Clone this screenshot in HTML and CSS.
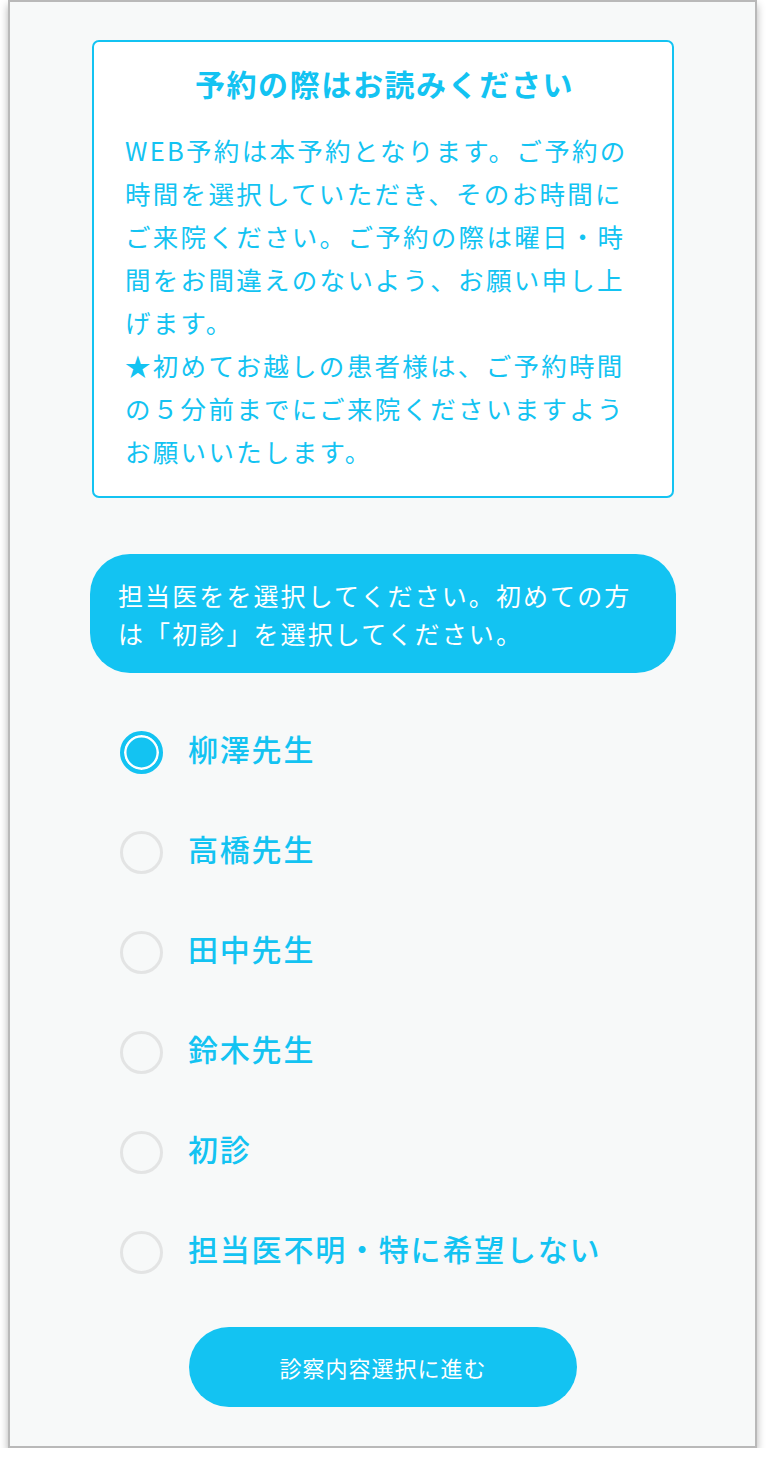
FILE: index.html
```html
<!DOCTYPE html>
<html lang="ja">
<head>
    <meta charset="UTF-8">
    <title>WEB予約 担当医選択</title>
    <link rel="stylesheet" href="styles.css">
</head>
<body>
    <div class="frame">
        <div class="notice">
            <h2>予約の際はお読みください</h2>
            <p>WEB予約は本予約となります。ご予約の時間を選択していただき、そのお時間にご来院ください。ご予約の際は曜日・時間をお間違えのないよう、お願い申し上げます。<br>★初めてお越しの患者様は、ご予約時間の５分前までにご来院くださいますようお願いいたします。</p>
        </div>

        <div class="bubble">担当医をを選択してください。初めての方は「初診」を選択してください。</div>

        <form class="doctor-list">
            <label class="doctor"><input type="radio" name="doctor" checked><span>柳澤先生</span></label>
            <label class="doctor"><input type="radio" name="doctor"><span>高橋先生</span></label>
            <label class="doctor"><input type="radio" name="doctor"><span>田中先生</span></label>
            <label class="doctor"><input type="radio" name="doctor"><span>鈴木先生</span></label>
            <label class="doctor"><input type="radio" name="doctor"><span>初診</span></label>
            <label class="doctor"><input type="radio" name="doctor"><span>担当医不明・特に希望しない</span></label>
        </form>

        <div class="actions">
            <a href="#" class="next-btn">診察内容選択に進む</a>
        </div>
    </div>
</body>
</html>
```

FILE: styles.css
```css
body {
    margin: 0;
    background-color: #fff;
    font-family: "Noto Sans CJK JP", "Noto Sans", sans-serif;
    color: #13c3f2;
}
.frame {
    box-sizing: border-box;
    width: 749px;
    height: 1448px;
    margin-left: 8px;
    border: 2px solid #b9b9b9;
    background-color: #f7f9f9;
    box-shadow: 0 5px 8px rgba(0, 0, 0, 0.3);
    padding: 38px 79px 0 80px;
}
.notice {
    background-color: #fff;
    border: 2px solid #13c3f2;
    border-radius: 7px;
    padding: 19px 28px 24px 31px;
    margin: 0 2px;
}
.notice h2 {
    margin: 0;
    font-size: 30px;
    line-height: 44px;
    font-weight: 700;
    letter-spacing: 1.6px;
    text-align: center;
}
.notice p {
    margin: 23px 0 0;
    font-size: 25.5px;
    line-height: 43px;
    letter-spacing: 2.3px;
}
.bubble {
    margin-top: 56px;
    background-color: #13c3f2;
    color: #fff;
    border-radius: 40px;
    padding: 22px 28px 21px;
    font-size: 25px;
    line-height: 38px;
    letter-spacing: 2.1px;
}
.doctor-list {
    margin: 29px 0 0;
    padding-left: 30px;
}
.doctor {
    display: flex;
    align-items: center;
    height: 100px;
    gap: 25px;
    cursor: pointer;
}
.doctor input {
    appearance: none;
    -webkit-appearance: none;
    margin: 0;
    width: 43px;
    height: 43px;
    border-radius: 50%;
    border: 3.5px solid #e3e4e4;
    box-sizing: border-box;
    background-color: transparent;
    flex-shrink: 0;
}
.doctor input:checked {
    border: 4px solid #13c3f2;
    background-color: #13c3f2;
    box-shadow: inset 0 0 0 2.5px #fff;
}
.doctor span {
    font-size: 30px;
    font-weight: 500;
    letter-spacing: 1.8px;
    padding-bottom: 8px;
}
.actions {
    display: flex;
    justify-content: center;
    margin-top: 25px;
}
.next-btn {
    display: flex;
    align-items: center;
    justify-content: center;
    width: 388px;
    height: 80px;
    border-radius: 40px;
    background-color: #13c3f2;
    color: #fff;
    text-decoration: none;
    font-size: 22px;
    letter-spacing: 1px;
}
```
